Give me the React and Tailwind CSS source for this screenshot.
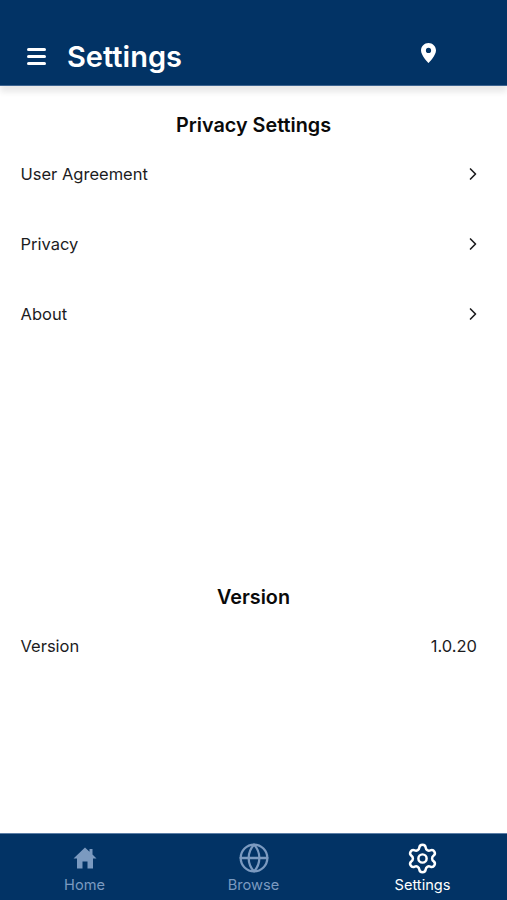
import React from "react";
import { ChevronRight, Globe, Settings } from "lucide-react";

function Row({ label, value }) {
  return (
    <div className="h-[70px] flex items-center justify-between pl-[20.5px] pr-[30px]">
      <span className="text-[16.5px] text-[#1c1c1e]">{label}</span>
      {value ? (
        <span className="text-[16.5px] text-[#1c1c1e]">{value}</span>
      ) : (
        <ChevronRight size={20} strokeWidth={2} className="text-[#1c1c1e] mr-[-6px]" />
      )}
    </div>
  );
}

function Tab({ label, active, children }) {
  return (
    <div className={`flex-1 flex flex-col items-center pt-[8px] ${active ? "text-white" : "text-[#7b9ac0]"}`}>
      <div className="h-[32px] flex items-center justify-center">{children}</div>
      <span className="text-[14.6px] leading-[18px] mt-[2px]">{label}</span>
    </div>
  );
}

export default function App() {
  return (
    <div className="w-[507px] h-[900px] flex flex-col bg-white font-['Inter',sans-serif] overflow-hidden">
      {/* Header */}
      <header className="h-[86px] shrink-0 bg-[#023365] border-b border-[#3d6490] flex items-start pt-[41px] pl-[27px] shadow-[0_6px_6px_rgba(0,0,0,0.09)] relative">
        <div className="w-[19px] mt-[7px] flex flex-col gap-[4.5px]">
          <div className="h-[2.5px] bg-white rounded-sm" />
          <div className="h-[2.5px] bg-white rounded-sm" />
          <div className="h-[2.5px] bg-white rounded-sm" />
        </div>
        <h1 className="ml-[21px] text-[29px] leading-[32px] font-semibold text-white">Settings</h1>
        <svg viewBox="0 0 15 20" className="ml-auto mr-[71px] mt-[2px] w-[15px] h-[20px]">
          <path
            fillRule="evenodd"
            fill="#fff"
            d="M7.5 0C3.4 0 0 3.3 0 7.4 0 12.5 7.5 20 7.5 20S15 12.5 15 7.4C15 3.3 11.6 0 7.5 0ZM7.5 10A2.6 2.6 0 1 1 7.5 4.8 2.6 2.6 0 0 1 7.5 10Z"
          />
        </svg>
      </header>

      <main className="flex-1 pt-[25px]">
        <h2 className="text-[19.8px] leading-[28px] font-semibold text-center text-[#0a0a0a]">Privacy Settings</h2>
        <Row label="User Agreement" />
        <Row label="Privacy" />
        <Row label="About" />

        <h2 className="mt-[234px] text-[19.8px] leading-[28px] font-semibold text-center text-[#0a0a0a]">Version</h2>
        <Row label="Version" value="1.0.20" />
      </main>

      {/* Tab bar */}
      <nav className="h-[67px] shrink-0 bg-[#023365] border-t border-[#5c7ea6] flex">
        <Tab label="Home">
          <svg viewBox="0 0 24 22" className="w-[24px] h-[22px]">
            <path
              fill="currentColor"
              d="M12 0.5 0.5 11.5H4V21.5H9.5V14.5H14.5V21.5H20V11.5H23.5L19.5 7.6V2H16.5V4.8Z"
            />
          </svg>
        </Tab>
        <Tab label="Browse">
          <Globe size={32} strokeWidth={1.7} />
        </Tab>
        <Tab label="Settings" active>
          <Settings size={33} strokeWidth={1.8} />
        </Tab>
      </nav>
    </div>
  );
}
